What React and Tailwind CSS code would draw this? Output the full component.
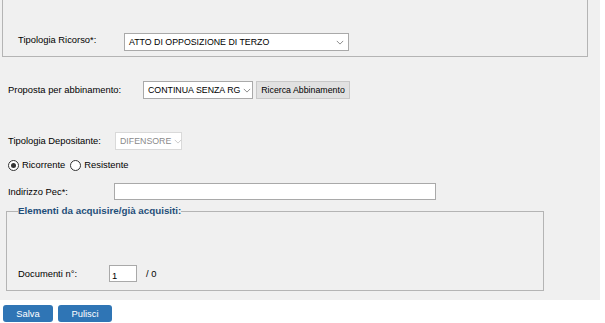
import { useState } from 'react'

const Chevron = ({ className }) => (
	<svg viewBox="0 0 10 6" className={className} fill="none" stroke="currentColor" strokeWidth="1">
		<path d="M1 1l4 4 4-4" />
	</svg>
)

const SelectBox = ({ value, className, disabled }) => (
	<div
		className={`flex shrink-0 items-center justify-between gap-[3px] border bg-white px-[4px] ${
			disabled ? 'border-[#d9d9d9] text-[#8a8a8a]' : 'border-[#a9a9a9] text-black'
		} ${className}`}
	>
		<span className="whitespace-nowrap text-[8.8px] leading-none">{value}</span>
		<Chevron className={`h-[5px] w-[8px] shrink-0 ${disabled ? 'text-[#c0c0c0]' : 'text-[#707070]'}`} />
	</div>
)

const Radio = ({ checked }) => (
	<span className="flex h-[11px] w-[11px] items-center justify-center rounded-full border border-[#333] bg-white">
		{checked && <span className="h-[5px] w-[5px] rounded-full bg-[#333]" />}
	</span>
)

export default function App() {
	const [role, setRole] = useState('ricorrente')

	return (
		<div
			className="h-[323px] w-[605px] whitespace-nowrap bg-white text-[9.4px] text-black"
			style={{ fontFamily: '"Liberation Sans", Arial, sans-serif' }}
		>
			<div className="h-[300px] w-[600px] bg-[#f0f0f0]">
				{/* top box, its upper edge is scrolled away */}
				<div className="ml-[2px] flex h-[57px] w-[586px] items-end border-x border-b border-[#b4b4b4] pb-[5px] pl-[15px]">
					<span className="w-[106px] shrink-0 pb-[4px]">Tipologia Ricorso*:</span>
					<SelectBox value="ATTO DI OPPOSIZIONE DI TERZO" className="h-[18px] w-[225px]" />
				</div>

				<div className="mt-[24px] flex items-center pl-[8px]">
					<span className="w-[135px] shrink-0">Proposta per abbinamento:</span>
					<SelectBox value="CONTINUA SENZA RG" className="h-[18px] w-[110px]" />
					<button className="ml-[3px] h-[18px] w-[94px] border border-[#c8c8c8] bg-[#e1e1e1] text-[8.8px] leading-none">
						Ricerca Abbinamento
					</button>
				</div>

				<div className="mt-[33px] flex items-center pl-[8px]">
					<span className="w-[107px] shrink-0">Tipologia Depositante:</span>
					<SelectBox value="DIFENSORE" className="h-[18px] w-[67px]" disabled />
				</div>

				<div className="mt-[8px] flex items-center gap-[4px] pl-[8px]">
					<button className="flex items-center gap-[3px]" onClick={() => setRole('ricorrente')}>
						<Radio checked={role === 'ricorrente'} />
						<span>Ricorrente</span>
					</button>
					<button className="ml-[1px] flex items-center gap-[3px]" onClick={() => setRole('resistente')}>
						<Radio checked={role === 'resistente'} />
						<span>Resistente</span>
					</button>
				</div>

				<div className="mt-[11px] flex items-center pl-[8px]">
					<span className="w-[106px] shrink-0">Indirizzo Pec*:</span>
					<input className="h-[17px] w-[322px] border border-[#a9a9a9] bg-white outline-none" />
				</div>

				<fieldset className="ml-[6px] mt-[5px] h-[86px] w-[538px] border border-[#b4b4b4] px-[11px]">
					<legend className="px-0 text-[9.8px] font-bold leading-[12px] text-[#1f4e79]">
						Elementi da acquisire/già acquisiti:
					</legend>
					<div className="mt-[48px] flex items-center">
						<span className="w-[91px] shrink-0">Documenti n°:</span>
						<input
							defaultValue="1"
							className="h-[17px] w-[28px] border border-[#a9a9a9] bg-white px-[2px] pt-[3px] text-[9.4px] outline-none"
						/>
						<span className="ml-[9px]">/ 0</span>
					</div>
				</fieldset>
			</div>

			<div className="mt-[5px] flex gap-[5px] pl-[3px]">
				<button className="h-[17px] w-[50px] rounded-[3px] bg-[#2f75b5] text-[9.4px] leading-none text-white">
					Salva
				</button>
				<button className="h-[17px] w-[54px] rounded-[3px] bg-[#2f75b5] text-[9.4px] leading-none text-white">
					Pulisci
				</button>
			</div>
		</div>
	)
}
